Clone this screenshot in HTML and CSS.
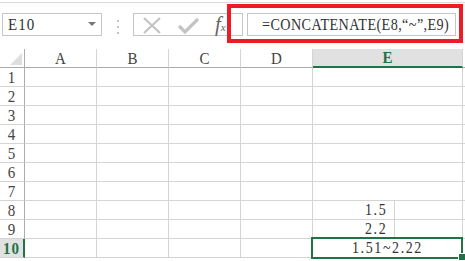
FILE: index.html
```html
<!DOCTYPE html>
<html lang="zh">
<head>
  <meta charset="UTF-8">
  <meta name="viewport" content="width=device-width, initial-scale=1.0">
  <title>CONCATENATE</title>
  <link rel="stylesheet" href="styles.css">
</head>
<body>
  <div class="toolbar">
    <div class="name_box">
      <span class="txt">E10</span>
      <svg class="arrow" width="8" height="4" viewBox="0 0 8 4"><polygon points="0,0 8,0 4,4" fill="#777"/></svg>
    </div>
    <svg class="dots" width="3" height="14" viewBox="0 0 3 14">
      <rect x="0" y="0" width="2" height="2" fill="#c4c4c4"/>
      <rect x="0" y="6" width="2" height="2" fill="#c4c4c4"/>
      <rect x="0" y="12" width="2" height="2" fill="#c4c4c4"/>
    </svg>
    <div class="fx_box">
      <svg class="ico_x" width="18" height="17" viewBox="0 0 18 17"><path d="M1 1 L17 16 M17 1 L1 16" stroke="#c3c3c3" stroke-width="2.2" fill="none"/></svg>
      <svg class="ico_ok" width="21" height="16" viewBox="0 0 21 16"><path d="M1 8 L7 14 L20 1" stroke="#c3c3c3" stroke-width="3.2" fill="none"/></svg>
      <span class="ico_fx"><i>f</i><span class="x">x</span></span>
    </div>
    <div class="formula"><span class="txt">=CONCATENATE(E8,“~”,E9)</span></div>
    <div class="mark"></div>
  </div>

  <div class="sheet">
    <div class="corner"><svg width="12" height="12" viewBox="0 0 12 12"><polygon points="12,0 12,12 0,12" fill="#dedede"/></svg></div>
    <div class="col_head"><span class="txt">A</span></div>
    <div class="col_head"><span class="txt">B</span></div>
    <div class="col_head"><span class="txt">C</span></div>
    <div class="col_head"><span class="txt">D</span></div>
    <div class="col_head sel"><span class="txt">E</span></div>
    <div class="col_head"></div>

    <div class="row_head"><span class="txt">1</span></div><div class="cell"></div><div class="cell"></div><div class="cell"></div><div class="cell"></div><div class="cell"></div><div class="cell"></div>
    <div class="row_head"><span class="txt">2</span></div><div class="cell"></div><div class="cell"></div><div class="cell"></div><div class="cell"></div><div class="cell"></div><div class="cell"></div>
    <div class="row_head"><span class="txt">3</span></div><div class="cell"></div><div class="cell"></div><div class="cell"></div><div class="cell"></div><div class="cell"></div><div class="cell"></div>
    <div class="row_head"><span class="txt">4</span></div><div class="cell"></div><div class="cell"></div><div class="cell"></div><div class="cell"></div><div class="cell"></div><div class="cell"></div>
    <div class="row_head"><span class="txt">5</span></div><div class="cell"></div><div class="cell"></div><div class="cell"></div><div class="cell"></div><div class="cell"></div><div class="cell"></div>
    <div class="row_head"><span class="txt">6</span></div><div class="cell"></div><div class="cell"></div><div class="cell"></div><div class="cell"></div><div class="cell"></div><div class="cell"></div>
    <div class="row_head"><span class="txt">7</span></div><div class="cell"></div><div class="cell"></div><div class="cell"></div><div class="cell"></div><div class="cell"></div><div class="cell"></div>
    <div class="row_head"><span class="txt">8</span></div><div class="cell"></div><div class="cell"></div><div class="cell"></div><div class="cell"></div>
    <div class="cell"><div class="part"><span class="txt">1.5</span></div></div><div class="cell"></div>
    <div class="row_head"><span class="txt">9</span></div><div class="cell"></div><div class="cell"></div><div class="cell"></div><div class="cell"></div>
    <div class="cell"><div class="part"><span class="txt">2.2</span></div></div><div class="cell"></div>
    <div class="row_head active"><span class="txt">10</span></div><div class="cell"></div><div class="cell"></div><div class="cell"></div><div class="cell"></div>
    <div class="cell current"><span class="txt">1.51~2.22</span></div><div class="cell"></div>
  </div>
</body>
</html>
```

FILE: styles.css
```css
*{
  margin: 0;
  padding: 0;
  box-sizing: border-box;
}

html{
  height: 100%;
  overflow: hidden;
}

body{
  width: 465px;
  height: 261px;
  background: #fff;
  font-family: "Liberation Serif", "Noto Sans CJK SC", serif;
  font-size: 14px;
  color: #333;
}

/* SimSun-like tall, thin glyphs */
.txt{
  display: inline-block;
  transform: scaleY(1.15);
  white-space: nowrap;
}

/* formula bar */
.toolbar{
  position: relative;
  height: 47px;
  margin-top: 2px;
  border-top: 1px solid #d9d9d9;
  display: flex;
  align-items: flex-start;
  padding-top: 10px;
}

.name_box{
  margin-left: 2px;
  width: 100px;
  height: 23px;
  border: 1px solid #c6c6c6;
  display: flex;
  align-items: center;
  justify-content: space-between;
  padding: 0 5px 0 5px;
  font-size: 15px;
  letter-spacing: 1px;
  color: #333;
}
.name_box .arrow{
  margin-bottom: 2px;
}

.dots{
  margin: 7px 0 0 15px;
}

.fx_box{
  margin-left: 13px;
  width: 110px;
  height: 23px;
  border: 1px solid #c6c6c6;
  display: flex;
  align-items: center;
  padding-left: 9px;
}
.ico_x{
  margin-top: 1px;
}
.ico_ok{
  margin-left: 17px;
  margin-top: 2px;
}
.ico_fx{
  margin-left: 16px;
  font-size: 21px;
  color: #666;
  line-height: 1;
}
.ico_fx .x{
  font-size: 11px;
  font-style: italic;
}

.formula{
  margin-left: 4px;
  width: 209px;
  height: 23px;
  border: 1px solid #c6c6c6;
  display: flex;
  align-items: center;
  padding-left: 14px;
  font-size: 14.2px;
  letter-spacing: 0.4px;
  color: #333;
}

/* red annotation frame */
.mark{
  position: absolute;
  left: 227px;
  top: 1px;
  width: 236px;
  height: 39px;
  border: 4px solid #ed1c24;
}

/* sheet */
.sheet{
  display: grid;
  grid-template-columns: 25px 72px 72px 72px 72px 150px 3px;
  grid-template-rows: 19px repeat(10, 19px);
}

.corner{
  border-right: 1px solid #ababab;
  border-bottom: 1px solid #ababab;
  display: flex;
  align-items: flex-end;
  justify-content: flex-end;
  padding: 0 2px 2px 0;
}

.col_head{
  border-right: 1px solid #d4d4d4;
  border-bottom: 1px solid #ababab;
  display: flex;
  justify-content: center;
  align-items: center;
  color: #444;
  font-size: 15px;
}
.col_head.sel{
  background: #e1e1e1;
  color: #217346;
  font-weight: bold;
  border-bottom: 2px solid #217346;
}

.row_head{
  border-right: 1px solid #ababab;
  border-bottom: 1px solid #d4d4d4;
  display: flex;
  justify-content: center;
  align-items: center;
  font-size: 15px;
  letter-spacing: 1px;
  color: #444;
}
.row_head.active{
  background: #e1e1e1;
  color: #217346;
  font-weight: bold;
  border-right: 2px solid #217346;
}

.cell{
  border-right: 1px solid #d4d4d4;
  border-bottom: 1px solid #d4d4d4;
  position: relative;
}

.part{
  width: 82px;
  height: 100%;
  border-right: 1px solid #d4d4d4;
  display: flex;
  align-items: center;
  padding-left: 52px;
  font-size: 14px;
  letter-spacing: 1.6px;
  color: #333;
}

.current{
  display: flex;
  justify-content: center;
  align-items: center;
  font-size: 14px;
  letter-spacing: 1.6px;
  color: #333;
}
.current::after{
  content: "";
  position: absolute;
  left: -2px;
  top: -2px;
  right: -1px;
  bottom: -2px;
  border: 2px solid #217346;
}
.current::before{
  content: "";
  position: absolute;
  right: -4px;
  bottom: -4px;
  width: 6px;
  height: 6px;
  background: #217346;
  border: 1px solid #fff;
  z-index: 1;
}
```
